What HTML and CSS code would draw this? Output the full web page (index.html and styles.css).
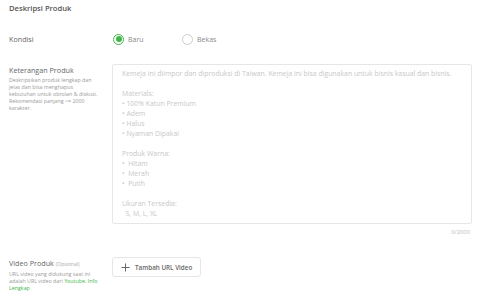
FILE: index.html
```html
<!DOCTYPE html>
<html lang="en">
<head>
  <meta charset="UTF-8" />
  <title>Deskripsi Produk</title>
  <link rel="stylesheet" href="styles.css">
</head>
<body>
  <div class="panel">
    <h2>Deskripsi Produk</h2>

    <div class="row row-kondisi">
      <div class="label">
        <div class="label-title">Kondisi</div>
      </div>
      <div class="field radios">
        <label class="radio checked"><span class="dot"></span>Baru</label>
        <label class="radio"><span class="dot"></span>Bekas</label>
      </div>
    </div>

    <div class="row row-desc">
      <div class="label">
        <div class="label-title">Keterangan Produk</div>
        <p class="hint">Deskripsikan produk lengkap dan<br>jelas dan bisa menghapus<br>kebutuhan untuk obrolan &amp; diskusi.<br>Rekomendasi panjang &lt;= 2000<br>karakter.</p>
      </div>
      <div class="field">
        <div class="textarea">Kemeja ini diimpor dan diproduksi di Taiwan. Kemeja ini bisa digunakan untuk bisnis kasual dan bisnis.

Materials:
• 100% Katun Premium
• Adem
• Halus
• Nyaman Dipakai

Produk Warna:
•  Hitam
•  Merah
•  Putih

Ukuran Tersedia:
  S, M, L, XL</div>
        <div class="counter">0/2000</div>
      </div>
    </div>

    <div class="row row-video">
      <div class="label">
        <div class="label-title">Video Produk <small>(Opsional)</small></div>
        <p class="hint">URL video yang didukung saat ini<br>adalah URL video dari <a href="#">Youtube</a>. <a href="#">Info<br>Lengkap</a></p>
      </div>
      <div class="field">
        <button class="btn-add">
          <svg width="9" height="9" viewBox="0 0 9 9"><path d="M4.5 0.5v8M0.5 4.5h8" stroke="#666" stroke-width="1" fill="none"/></svg>
          Tambah URL Video
        </button>
      </div>
    </div>
  </div>
</body>
</html>
```

FILE: styles.css
```css
:root {
  --text: #595959;
  --muted: #9e9e9e;
  --light: #c8c8c8;
  --border: #e6e6e6;
  --green: #42b549;
}
* {
  margin: 0;
  padding: 0;
  box-sizing: border-box;
}
body {
  font-family: 'Open Sans', sans-serif;
  background: #fff;
  color: var(--text);
  width: 480px;
  height: 295px;
  overflow: hidden;
}
.panel {
  padding: 2px 9px 0 9px;
}
.panel h2 {
  font-size: 7.6px;
  font-weight: 600;
  color: #555;
  height: 19px;
  line-height: 12px;
}
.row {
  display: flex;
}
.label {
  width: 103px;
  flex-shrink: 0;
}
.label-title {
  font-size: 7.2px;
  line-height: 11px;
  color: #666;
}
.label-title small {
  font-size: 5px;
  color: #aaa;
}
.hint {
  font-size: 5.3px;
  line-height: 7px;
  color: #9a9a9a;
  margin-top: 1px;
}
.hint a {
  color: var(--green);
  text-decoration: none;
}
.field {
  flex: 1;
}
.row-kondisi {
  align-items: center;
  height: 22px;
  margin-top: 7px;
}
.radios {
  display: flex;
}
.radio {
  display: flex;
  align-items: center;
  font-size: 7px;
  color: #888;
  width: 68px;
  margin-left: 1px;
}
.dot {
  width: 11px;
  height: 11px;
  border-radius: 50%;
  border: 1px solid #ccc;
  margin-right: 4px;
  position: relative;
}
.radio.checked .dot {
  border-color: var(--green);
}
.radio.checked .dot::after {
  content: '';
  position: absolute;
  left: 1.5px;
  top: 1.5px;
  width: 6px;
  height: 6px;
  border-radius: 50%;
  background: var(--green);
}
.row-desc {
  margin-top: 14px;
}
.row-desc .label {
  padding-top: 1px;
}
.textarea {
  width: 360px;
  height: 160px;
  border: 1px solid var(--border);
  border-radius: 2px;
  padding: 4px 9px;
  font-size: 6.9px;
  line-height: 10px;
  color: var(--light);
  white-space: pre-wrap;
}
.counter {
  width: 360px;
  text-align: right;
  font-size: 5.8px;
  color: #bbb;
  margin-top: 4px;
  padding-right: 2px;
}
.row-video {
  margin-top: 21px;
}
.row-video .label-title {
  margin-top: 1px;
}
.btn-add {
  display: flex;
  align-items: center;
  gap: 5px;
  height: 20px;
  padding: 0 8px;
  background: #fff;
  border: 1px solid var(--border);
  border-radius: 3px;
  font-family: 'Open Sans', sans-serif;
  font-size: 6.3px;
  font-weight: 600;
  color: #666;
}
```
